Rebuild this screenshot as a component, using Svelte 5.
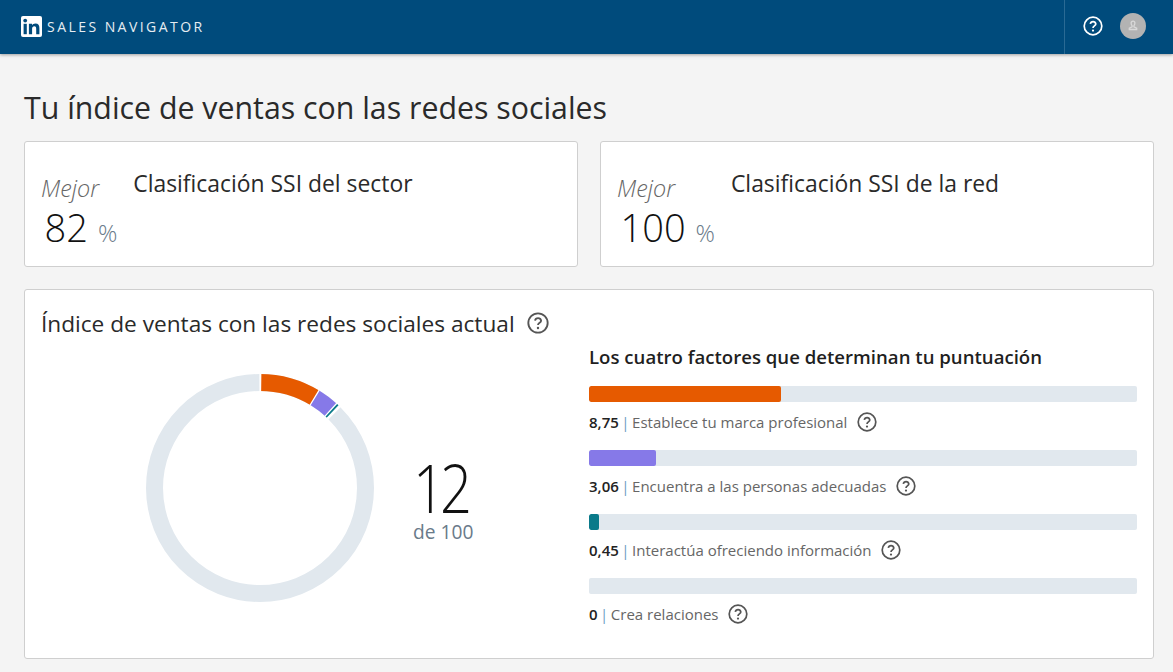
<script lang="ts">
  const factors = [
    { score: 8.75, label: 'Establece tu marca profesional', color: '#e65a00' },
    { score: 3.06, label: 'Encuentra a las personas adecuadas', color: '#8679e8' },
    { score: 0.45, label: 'Interactúa ofreciendo información', color: '#0a7a8a' },
    { score: 0, label: 'Crea relaciones', color: '#e65a00' }
  ];

  const radius = 105.5;
  const circumference = 2 * Math.PI * radius;
  const gap = 2.6;

  let offset = 0;
  const segments = factors.map((f) => {
    const seg = { ...f, len: (f.score / 100) * circumference, start: offset };
    offset += seg.len;
    return seg;
  });
</script>

{#snippet help(size = 20)}
  <svg class="help" width={size} height={size} viewBox="0 0 20 20" aria-hidden="true">
    <circle cx="10" cy="10" r="8.8" fill="none" stroke="currentColor" stroke-width="1.7" />
    <path d="M7.3 7.9a2.8 2.8 0 0 1 5.5 0c0 1.9-2.8 2-2.8 4" fill="none" stroke="currentColor" stroke-width="1.7" />
    <circle cx="10" cy="14.6" r="1.1" fill="currentColor" />
  </svg>
{/snippet}

<header class="topbar">
  <div class="brand">
    <svg class="logo" width="21" height="21" viewBox="0 0 21 21" aria-hidden="true">
      <rect width="21" height="21" rx="2" fill="#fff" />
      <rect x="2.6" y="7.8" width="3.2" height="10.4" fill="#004b7c" />
      <circle cx="4.2" cy="4.6" r="1.9" fill="#004b7c" />
      <path d="M7.9 7.8h3.1v1.5c.6-1 1.8-1.8 3.4-1.8 3 0 4 1.9 4 4.8v5.900h-3.200v-5.300c0-1.400-.4-2.600-1.800-2.600-1.500 0-2.300 1-2.300 2.600v5.300H7.900z" fill="#004b7c" />
    </svg>
    <span class="product">SALES NAVIGATOR</span>
  </div>
  <div class="actions">
    <span class="action-help">{@render help(20)}</span>
    <span class="avatar">
      <svg width="16" height="16" viewBox="0 0 16 16" aria-hidden="true">
        <path d="M8 3.200a1.900 1.900 0 0 1 1.900 1.900c0 1.200-.6 2.200-1 2.800v1l2.800 1.200v1.400H4.300v-1.400l2.800-1.200v-1c-.4-.6-1-1.600-1-2.800A1.900 1.900 0 0 1 8 3.200z" fill="none" stroke="#d9d9d9" stroke-width="1.300" />
      </svg>
    </span>
  </div>
</header>

<main class="page">
  <h1>Tu índice de ventas con las redes sociales</h1>

  <div class="ranks">
    <section class="card rank">
      <div class="rank-value">
        <em>Mejor</em>
        <div class="pct"><span class="num">82</span><span class="sign">%</span></div>
      </div>
      <h2>Clasificación SSI del sector</h2>
    </section>
    <section class="card rank">
      <div class="rank-value">
        <em>Mejor</em>
        <div class="pct"><span class="num">100</span><span class="sign">%</span></div>
      </div>
      <h2>Clasificación SSI de la red</h2>
    </section>
  </div>

  <section class="card current">
    <div class="left">
      <h2 class="current-title">Índice de ventas con las redes sociales actual <span class="title-help">{@render help(22)}</span></h2>
      <div class="chart">
        <svg class="donut" width="228" height="228" viewBox="0 0 228 228" aria-hidden="true">
          <circle cx="114" cy="114" r={radius} fill="none" stroke="#e1e8ee" stroke-width="17" />
          <g transform="rotate(-90 114 114)">
            {#each segments as s}
              {#if s.len > 0}
                <circle
                  cx="114"
                  cy="114"
                  r={radius}
                  fill="none"
                  stroke={s.color}
                  stroke-width="17"
                  stroke-dasharray="{s.len} {circumference - s.len}"
                  stroke-dashoffset={-s.start}
                />
                <circle
                  cx="114"
                  cy="114"
                  r={radius}
                  fill="none"
                  stroke="#fff"
                  stroke-width="18"
                  stroke-dasharray="{gap} {circumference - gap}"
                  stroke-dashoffset={-(s.start + s.len - gap / 2)}
                />
              {/if}
            {/each}
            <!-- gap at twelve o'clock, drawn last so the first segment doesn't cover it -->
            <circle
              cx="114"
              cy="114"
              r={radius}
              fill="none"
              stroke="#fff"
              stroke-width="18"
              stroke-dasharray="{gap} {circumference - gap}"
              stroke-dashoffset={gap / 2}
            />
          </g>
        </svg>
        <div class="total">
          <span class="total-num">12</span>
          <span class="total-of">de 100</span>
        </div>
      </div>
    </div>

    <div class="right">
      <h3>Los cuatro factores que determinan tu puntuación</h3>
      {#each factors as f}
        <div class="factor">
          <div class="track">
            {#if f.score > 0}
              <div class="fill" style="width: {(f.score / 25) * 100}%; background: {f.color}"></div>
            {/if}
          </div>
          <div class="factor-label">
            <strong>{f.score.toString().replace('.', ',')}</strong>
            <span class="pipe">|</span>
            <span>{f.label}</span>
            <span class="factor-help">{@render help(20)}</span>
          </div>
        </div>
      {/each}
    </div>
  </section>
</main>

<style>
  :global(body) {
    background: #f4f4f4;
    font-family: 'Open Sans', 'Noto Sans', sans-serif;
    color: #1a1a1a;
  }

  .topbar {
    height: 54px;
    background: #004b7c;
    box-shadow: 0 1px 3px rgba(0, 0, 0, 0.35);
    display: flex;
    justify-content: space-between;
    align-items: stretch;
    box-sizing: border-box;
    padding-left: 21px;
  }

  .brand {
    display: flex;
    align-items: center;
    gap: 5px;
    padding-bottom: 1px;
  }

  .logo {
    display: block;
  }

  .product {
    color: #e6edf2;
    font-size: 14px;
    letter-spacing: 2.45px;
  }

  .actions {
    display: flex;
    align-items: center;
    width: 109px;
    box-sizing: border-box;
    border-left: 1px solid #2a6a94;
    padding-left: 18px;
    padding-bottom: 2px;
    gap: 17px;
  }

  .action-help {
    color: #fff;
    display: flex;
  }

  .avatar {
    width: 26px;
    height: 26px;
    border-radius: 50%;
    background: #b3b3b3;
    display: flex;
    align-items: center;
    justify-content: center;
  }

  .help {
    display: block;
  }

  .page {
    padding: 35px 19px 13px 24px;
  }

  h1 {
    margin: 0 0 14px;
    font-size: 30.3px;
    font-weight: 400;
    line-height: 38px;
    color: #2a2a2a;
  }

  .card {
    background: #fff;
    border: 1px solid #cfcfcf;
    border-radius: 3px;
    box-sizing: border-box;
  }

  .ranks {
    display: flex;
    gap: 22px;
    margin-bottom: 22px;
  }

  .rank {
    flex: 1;
    height: 126px;
    display: flex;
    gap: 16px;
    padding: 30px 16px 0;
  }

  .rank-value {
    flex: none;
  }

  .rank-value em {
    display: block;
    font-size: 23.4px;
    line-height: 32px;
    color: #666;
    font-style: italic;
    font-weight: 300;
  }

  .pct {
    padding-left: 3.5px;
    display: flex;
    align-items: baseline;
    gap: 10px;
    line-height: 42px;
    margin-top: 2px;
  }

  .num {
    font-size: 38px;
    color: #111;
    font-weight: 300;
  }

  .sign {
    font-size: 24px;
    color: #6a7b8a;
    font-weight: 300;
  }

  .rank h2 {
    margin: -3px 0 0;
    font-size: 22.9px;
    font-weight: 400;
    line-height: 30px;
    color: #2a2a2a;
  }

  .current {
    height: 370px;
    display: flex;
    padding: 0 16px;
  }

  .left {
    width: 548px;
    flex: none;
  }

  .current-title {
    margin: 19px 0 0;
    font-size: 22.65px;
    font-weight: 400;
    line-height: 30px;
    color: #2a2a2a;
    display: flex;
    align-items: center;
    gap: 12px;
    white-space: nowrap;
  }

  .title-help {
    color: #555;
    margin-top: -3px;
  }

  .chart {
    display: flex;
    align-items: center;
    margin-top: 35px;
    padding-left: 105px;
  }

  .donut {
    display: block;
  }

  .total {
    margin-left: 39px;
    width: 60px;
    display: flex;
    flex-direction: column;
    align-items: flex-start;
    padding-top: 28px;
  }

  .total-num {
    display: block;
    font-size: 66px;
    line-height: 54px;
    font-weight: 300;
    letter-spacing: -6px;
    color: #111;
    transform: scaleX(0.85);
    transform-origin: left center;
  }

  .total-of {
    font-size: 19.2px;
    line-height: 24px;
    color: #6a7b8a;
    margin-top: 6px;
    white-space: nowrap;
  }

  .right {
    flex: 1;
    min-width: 0;
  }

  h3 {
    margin: 53px 0 0;
    font-size: 18.6px;
    line-height: 28px;
    font-weight: 600;
    color: #1f1f1f;
  }

  .factor {
    margin-top: 15px;
    height: 49px;
  }

  .track {
    height: 16px;
    background: #e1e8ee;
    border-radius: 2px;
    overflow: hidden;
  }

  .fill {
    height: 100%;
    border-radius: 2px;
  }

  .factor-label {
    display: flex;
    align-items: center;
    margin-top: 9px;
    height: 22px;
    font-size: 15px;
    color: #666;
  }

  .factor-label strong {
    font-weight: 600;
    color: #222;
  }

  .pipe {
    margin: 0 2.5px;
    color: #6a9cc4;
  }

  .factor-help {
    color: #555;
    margin-left: 9.5px;
  }
</style>
